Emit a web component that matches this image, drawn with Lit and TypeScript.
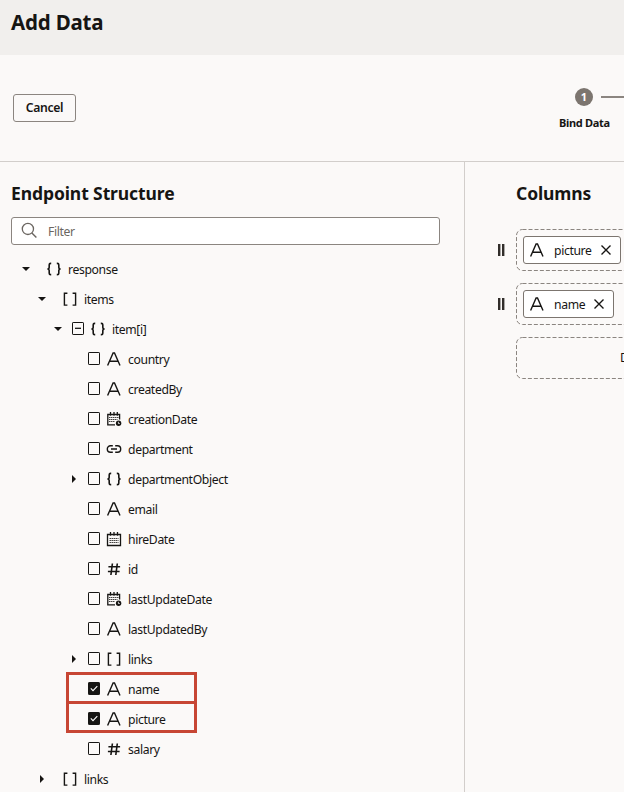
import { LitElement, html, css, svg, nothing } from "lit";
import { customElement } from "lit/decorators.js";
import { classMap } from "lit/directives/class-map.js";

type Kind = "object" | "array" | "text" | "datetime" | "date" | "link" | "number";
interface Node {
  label: string;
  kind: Kind;
  depth: number;
  arrow?: "open" | "closed";
  check?: "off" | "on" | "mixed";
  mark?: "upper" | "lower";
}

const nodes: Node[] = [
  { label: "response", kind: "object", depth: 0, arrow: "open" },
  { label: "items", kind: "array", depth: 1, arrow: "open" },
  { label: "item[i]", kind: "object", depth: 2, arrow: "open", check: "mixed" },
  { label: "country", kind: "text", depth: 3, check: "off" },
  { label: "createdBy", kind: "text", depth: 3, check: "off" },
  { label: "creationDate", kind: "datetime", depth: 3, check: "off" },
  { label: "department", kind: "link", depth: 3, check: "off" },
  { label: "departmentObject", kind: "object", depth: 3, arrow: "closed", check: "off" },
  { label: "email", kind: "text", depth: 3, check: "off" },
  { label: "hireDate", kind: "date", depth: 3, check: "off" },
  { label: "id", kind: "number", depth: 3, check: "off" },
  { label: "lastUpdateDate", kind: "datetime", depth: 3, check: "off" },
  { label: "lastUpdatedBy", kind: "text", depth: 3, check: "off" },
  { label: "links", kind: "array", depth: 3, arrow: "closed", check: "off" },
  { label: "name", kind: "text", depth: 3, check: "on", mark: "upper" },
  { label: "picture", kind: "text", depth: 3, check: "on", mark: "lower" },
  { label: "salary", kind: "number", depth: 3, check: "off" },
  { label: "links", kind: "array", depth: 1, arrow: "closed" },
];

const shapes: Record<Kind, unknown> = {
  text: svg`<path d="M1.6 14.5 7.1 2h1.4l5.5 12.5M3.7 10.3h8.2" stroke-width="1.4"/>`,
  object: svg`<path d="M5.2 2.4H4.7Q3.2 2.4 3.2 3.8v2.5Q3.2 8 1.4 8 3.2 8 3.2 9.7v2.5q0 1.4 1.5 1.4h.5M10.8 2.4h.5q1.5 0 1.5 1.4v2.5q0 1.7 1.8 1.7-1.8 0-1.8 1.7v2.5q0 1.4-1.5 1.4h-.5" stroke-width="1.6"/>`,
  array: svg`<path d="M5.4 2.3H2.4v11.8h3M10.6 2.3h3v11.8h-3" stroke-width="1.4"/>`,
  number: svg`<path d="M6.4 2.5 4.9 14M11.3 2.5 9.8 14M2.4 5.7h11.7M1.9 10.5h11.7" stroke-width="1.6"/>`,
  link: svg`<path d="M6.8 4.8H4.5a3.2 3.2 0 0 0 0 6.4h2.3M9.2 4.8h2.3a3.2 3.2 0 0 1 0 6.4H9.2M5 8h6" stroke-width="1.4"/>`,
  date: svg`<path d="M1.5 3.5h13v11h-13zM4.5 1v3.8M8 1v3.8M11.5 1v3.8" stroke-width="1.3"/><path d="M3.5 7.5h9M3.5 9.5h9M3.5 11.5h9" stroke-width="1" stroke-dasharray="1.5 .5" opacity=".8"/>`,
  datetime: svg`<path d="M9 13.8H1.8V3.5h11.8v5M4.5 1v3.8M8 1v3.8M11.3 1v3.8" stroke-width="1.3"/><path d="M3 6.5h10M3 8.5h8.5M3 10.5h6" stroke-width="1" stroke-dasharray="1.5 .5" opacity=".8"/><circle cx="12.6" cy="12.3" r="2.7" fill="currentColor" stroke="none"/><path d="M12.4 10.8v1.7h1.4" stroke="#fbf9f8" stroke-width=".8"/>`,
};

const icon = (kind: Kind) =>
  html`<svg class="icon" viewBox="0 0 16 16">${shapes[kind]}</svg>`;

@customElement("app-root")
export class AppRoot extends LitElement {
  static styles = css`
    :host {
      display: flex;
      flex-direction: column;
      width: 624px;
      height: 792px;
      overflow: hidden;
      background: #fbf9f8;
      color: #161513;
      font: 12.2px/18px "Noto Sans", "Open Sans", sans-serif;
      letter-spacing: -0.37px;
    }
    *, *::after { box-sizing: border-box; }
    svg { display: block; flex: none; fill: none; stroke: currentColor; }
    .head { flex: none; height: 55px; background: #f1efed; padding: 8px 11px; }
    h1 { margin: 0; font-size: 20.5px; line-height: 28px; font-weight: 700; letter-spacing: -0.2px; }
    h2 { margin: 0; font-size: 17.5px; line-height: 24px; font-weight: 700; letter-spacing: -0.1px; white-space: nowrap; }
    .steps {
      flex: none; display: flex; justify-content: space-between; align-items: flex-start;
      height: 107px; border-bottom: 1px solid #d2cecb; padding: 33px 0 0 13px;
    }
    .cancel {
      width: 63px; height: 28px; margin-top: 6px; padding: 0; border: 1px solid #8b8580; border-radius: 3px;
      background: transparent; color: inherit; font: 600 12.2px/18px "Noto Sans", sans-serif; letter-spacing: -0.35px;
    }
    .step { width: 66px; }
    .track { display: flex; align-items: center; gap: 8px; padding-left: 17px; }
    .dot {
      flex: none; width: 18px; height: 18px; border-radius: 50%; background: #7c756f; color: #fff;
      text-align: center; font-size: 11px; line-height: 18px; font-weight: 700; letter-spacing: 0;
    }
    .rail { flex: 1; height: 2px; background: #8b8580; }
    .caption { margin-top: 9px; padding-left: 1px; font-size: 11px; line-height: 16px; font-weight: 700; letter-spacing: -0.3px; white-space: nowrap; }
    .body { flex: 1; display: flex; min-height: 0; }
    .left { width: 465px; flex: none; border-right: 1px solid #d2cecb; padding-top: 19px; }
    .left h2 { padding-left: 11px; }
    .filter {
      display: flex; align-items: center; gap: 11px; width: 429px; height: 28px; margin: 12px 0 9px 11px;
      padding-left: 9px; border: 1px solid #8b8580; border-radius: 3px; background: #fff; color: #6b6661;
    }
    .filter span { margin-top: 2px; }
    .filter svg { margin-bottom: 2px; }
    .row { display: flex; align-items: center; height: 30px; position: relative; }
    .d0 { padding-left: 20px; }
    .d1 { padding-left: 36px; }
    .d2 { padding-left: 52px; }
    .d3 { padding-left: 68px; }
    .arrow { width: 12px; height: 12px; margin-right: 8px; fill: currentColor; stroke: none; }
    .plain .arrow { margin-right: 14px; }
    .box { width: 12px; height: 13px; margin: 0 6px 1px 0; }
    .icon { width: 16px; height: 16px; }
    .label { margin: 2px 0 0 6px; white-space: nowrap; }
    .row .label { margin-top: 1px; }
    .upper::after, .lower::after {
      content: ""; position: absolute; left: 66px; top: -2px; width: 131px; height: 32px; border: 3px solid #c74634;
    }
    .lower::after { top: -3px; }
    .right { flex: 1; min-width: 0; padding-top: 19px; overflow: hidden; }
    .right h2 { padding-left: 51px; margin-bottom: 24px; }
    .column { display: flex; align-items: center; margin-bottom: 12px; }
    .grip { flex: none; width: 7px; height: 12px; margin: 0 11px 1px 33px; fill: #312d2a; stroke: none; }
    .slot { display: flex; align-items: center; flex: none; width: 240px; height: 42px; padding-left: 7px; }
    .outline { position: absolute; margin-left: -7px; }
    .drop { margin-left: 51px; padding-left: 104px; }
    .drop .outline { margin-left: -104px; }
    .chip {
      display: flex; align-items: center; height: 28px; padding: 0 9px 0 5px; position: relative;
      border: 1px solid #7c756f; border-radius: 3px; background: #fff;
    }
    .chip .label { margin-left: 9px; }
    .close { width: 10px; height: 10px; margin-left: 9px; }
  `;

  private outline() {
    return html`<svg class="outline" width="240" height="42">
      <rect x=".5" y=".5" width="239" height="41" rx="6" stroke="#8b8580" stroke-dasharray="4 2"/>
    </svg>`;
  }

  private box(state: "off" | "on" | "mixed") {
    return html`<svg class="box" viewBox="0 0 12 13">
      <rect x=".5" y=".5" width="11" height="12" rx=".6" fill=${state === "on" ? "#161513" : "none"}/>
      ${state === "on" ? svg`<path d="m2.8 6.4 2.2 2.2 4.3-4.4" stroke="#fff" stroke-width="1.1"/>` : nothing}
      ${state === "mixed" ? svg`<path d="M3 6.3h6" stroke-width="1.3"/>` : nothing}
    </svg>`;
  }

  private row(n: Node) {
    const classes = { row: true, [`d${n.depth}`]: true, plain: !n.check, upper: n.mark === "upper", lower: n.mark === "lower" };
    return html`<div class=${classMap(classes)}>
      <svg class="arrow" viewBox="0 0 12 12">
        ${n.arrow ? svg`<path d=${n.arrow === "open" ? "M2 4h8L6 8z" : "M4 2v8l4-4z"}/>` : nothing}
      </svg>
      ${n.check ? this.box(n.check) : nothing}
      ${icon(n.kind)}<span class="label">${n.label}</span>
    </div>`;
  }

  private column(name: string) {
    return html`<div class="column">
      <svg class="grip" viewBox="0 0 7 12"><path d="M0 0h2.4v12H0zM4 0h2.4v12H4z"/></svg>
      <div class="slot">${this.outline()}
        <div class="chip">${icon("text")}<span class="label">${name}</span>
          <svg class="close" viewBox="0 0 10 10"><path d="m.5.5 9 9m0-9-9 9" stroke-width="1.4"/></svg>
        </div>
      </div>
    </div>`;
  }

  render() {
    return html`
      <header class="head"><h1>Add Data</h1></header>
      <div class="steps">
        <button class="cancel">Cancel</button>
        <div class="step">
          <div class="track"><span class="dot">1</span><span class="rail"></span></div>
          <div class="caption">Bind Data</div>
        </div>
      </div>
      <main class="body">
        <section class="left">
          <h2>Endpoint Structure</h2>
          <div class="filter">
            <svg width="16" height="16" viewBox="0 0 16 16"><circle cx="6.9" cy="6.9" r="5.6" stroke-width="1.3"/><path d="m10.9 10.9 4.5 4.5" stroke-width="1.4"/></svg>
            <span>Filter</span>
          </div>
          ${nodes.map((n) => this.row(n))}
        </section>
        <section class="right">
          <h2>Columns</h2>
          ${this.column("picture")}
          ${this.column("name")}
          <div class="slot drop">${this.outline()}<span>D</span></div>
        </section>
      </main>`;
  }
}
